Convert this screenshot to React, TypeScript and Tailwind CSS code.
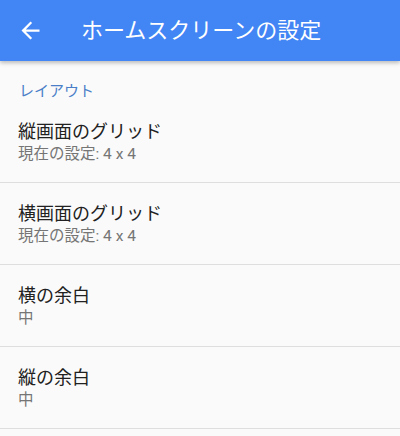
const items = [
  { title: "縦画面のグリッド", summary: "現在の設定: 4 x 4" },
  { title: "横画面のグリッド", summary: "現在の設定: 4 x 4" },
  { title: "横の余白", summary: "中" },
  { title: "縦の余白", summary: "中" },
];

const BackArrow = () => (
  <svg viewBox="0 0 24 24" className="h-[27px] w-[27px]" fill="white">
    <path d="M20 11H7.83l5.59-5.59L12 4l-8 8 8 8 1.41-1.41L7.83 13H20v-2z" />
  </svg>
);

const PrefItem = ({ title, summary }: { title: string; summary: string }) => (
  <div className="h-[82px] border-b border-[#dedede] pl-[18px] pt-[19px]">
    <div className="text-[18px] leading-6 text-[#212121]">{title}</div>
    <div className="text-[15.5px] leading-5 text-[#757575]">{summary}</div>
  </div>
);

const App = () => {
  return (
    <div
      className="h-[436px] w-[400px] overflow-hidden bg-[#fafafa]"
      style={{ fontFamily: 'Roboto, "Noto Sans CJK JP", sans-serif' }}
    >
      <header className="relative z-10 flex h-[61px] items-center bg-[#4285f4] shadow-[0_2px_4px_rgba(0,0,0,0.25)]">
        <div className="ml-[17px] flex items-center">
          <BackArrow />
        </div>
        <h1 className="ml-[37px] text-[22px] font-normal text-white">ホームスクリーンの設定</h1>
      </header>
      <div className="pl-[19px] pt-[20px] text-[15px] leading-5 text-[#4a7fc8]">レイアウト</div>
      {items.map((item) => (
        <PrefItem key={item.title} title={item.title} summary={item.summary} />
      ))}
    </div>
  );
};

export default App;
